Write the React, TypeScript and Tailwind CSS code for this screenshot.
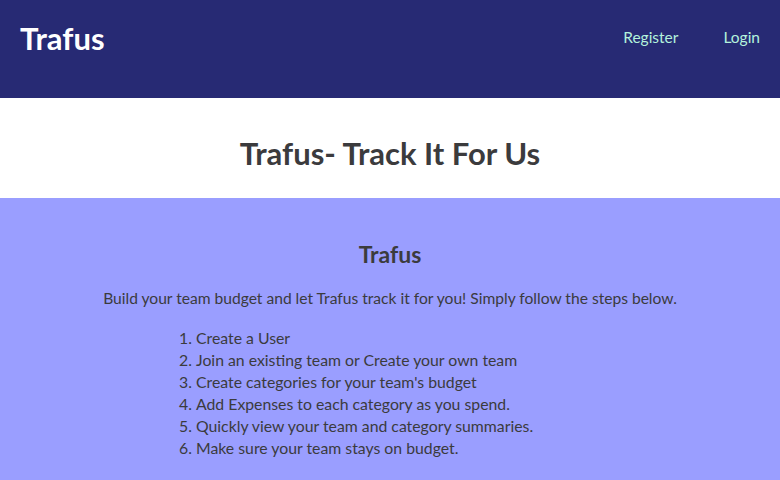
import React from 'react';

const steps = [
  'Create a User',
  'Join an existing team or Create your own team',
  "Create categories for your team's budget",
  'Add Expenses to each category as you spend.',
  'Quickly view your team and category summaries.',
  'Make sure your team stays on budget.',
];

export default function App() {
  return (
    <div className="min-h-[480px] bg-[#9a9eff] font-['Lato',sans-serif] text-[#3b3b3d]">
      <header className="flex h-[98px] items-start justify-between bg-[#272a74] px-5 pt-[20px]">
        <a className="text-[31px] font-bold leading-[36px] text-white">Trafus</a>
        <nav className="flex gap-[45px] pt-[6px] text-[15.5px] text-[#b4f2dc]">
          <a>Register</a>
          <a>Login</a>
        </nav>
      </header>

      <section className="flex h-[100px] items-center justify-center bg-white">
        <h1 className="pt-[10px] text-[31px] font-bold">Trafus- Track It For Us</h1>
      </section>

      <main className="pt-[41px] pb-4">
        <h2 className="text-center text-[23px] font-bold leading-[30px]">Trafus</h2>
        <p className="mt-[18px] text-center text-[15.6px]">
          Build your team budget and let Trafus track it for you! Simply follow the steps below.
        </p>
        <ol className="mt-[17px] ml-[196px] list-decimal text-[15.8px] leading-[22px]">
          {steps.map((s) => (
            <li key={s}>{s}</li>
          ))}
        </ol>
      </main>
    </div>
  );
}
